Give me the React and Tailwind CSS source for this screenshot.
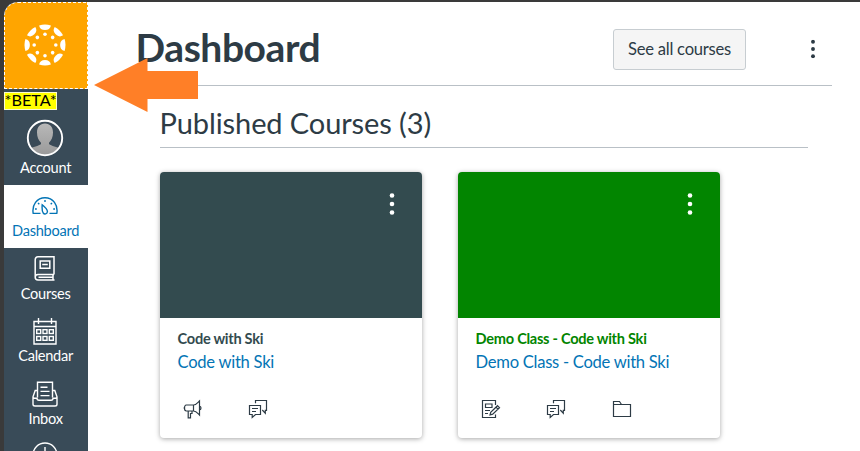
const NAV = [
  { label: 'Account', icon: AvatarIcon },
  { label: 'Dashboard', icon: GaugeIcon, active: true },
  { label: 'Courses', icon: BookIcon },
  { label: 'Calendar', icon: CalendarIcon },
  { label: 'Inbox', icon: InboxIcon },
];

function CanvasLogo() {
  const angles = [0, 45, 90, 135, 180, 225, 270, 315];
  return (
    <svg width="42" height="42" viewBox="-21 -21 42 42" fill="#fff">
      {angles.map((a) => (
        <g key={a} transform={`rotate(${a})`}>
          <path d="M-5.9 -19.6 A20.6 20.6 0 0 1 5.9 -19.6 A6 5.5 0 0 1 -5.9 -19.6Z" />
          <circle cx="0" cy="-10.8" r="1.8" />
        </g>
      ))}
    </svg>
  );
}

function AvatarIcon() {
  return (
    <svg width="38" height="38" viewBox="0 0 38 38">
      <defs>
        <clipPath id="face"><circle cx="19" cy="19" r="16.5" /></clipPath>
        <linearGradient id="person" x1="0" y1="0" x2="0" y2="1">
          <stop offset="0" stopColor="#b8b8b8" />
          <stop offset="1" stopColor="#989898" />
        </linearGradient>
      </defs>
      <circle cx="19" cy="19" r="17.2" fill="#3a4a57" />
      <g clipPath="url(#face)" fill="url(#person)">
        <path d="M19 4.5c5 0 8 3.700 8 9 0 4.500-1.600 8-4 10.200v1.200c2 2.200 8.500 2.600 11.500 5.100V38h-31v-8c3-2.500 9.500-2.900 11.500-5.100v-1.200c-2.400-2.200-4-5.700-4-10.200 0-5.300 3-9 8-9z" />
      </g>
      <circle cx="19" cy="19" r="17.200" fill="none" stroke="#fff" strokeWidth="1.900" />
    </svg>
  );
}

function GaugeIcon() {
  return (
    <svg width="26" height="18" viewBox="0 0 26 18" fill="none" stroke="#0374b5" strokeWidth="1.400">
      <path d="M8.500 16.400H1.200C-.3 8 5 .8 13 .8S26.300 8 24.800 16.400h-7.300" />
      <path d="M10.200 7.800c-.3 3.400 0 6.600 1 8.200 1.200 1.700 4 1 4.200-1.200.2-2.200-2.400-4.700-5.200-7z" />
      <path d="M13 3v2M6 6l1.300 1.300M20 6l-1.300 1.300M3 12h1.800M21.200 12H23" />
    </svg>
  );
}

function BookIcon() {
  return (
    <svg width="22" height="25" viewBox="0 0 22 25" fill="none" stroke="#fff" strokeWidth="1.500">
      <path d="M20 18.500V.8H4C2.300.8 1.200 2 1.200 3.700v17.500c0 1.700 1 2.700 2.800 2.700h16.500M20 18.500H4c-3.700 0-3.700 5.400 0 5.400M19 18.500v5.400M4.500 21.200H19" />
      <path d="M6.200 5h9.600v7.300H6.200zM8.200 8.400h5.600" />
    </svg>
  );
}

function CalendarIcon() {
  const cols = [3.700, 10, 16.300];
  return (
    <svg width="24" height="27" viewBox="0 0 24 27" fill="none" stroke="#fff" strokeWidth="1.400">
      <path d="M1 3.500h22V26H1zM1 8.500h22M5.500 0v6M18.500 0v6" />
      {cols.map((x) => (
        <g key={x}>
          <rect x={x} y="11.700" width="4" height="3.800" />
          <rect x={x} y="18.500" width="4" height="3.800" />
        </g>
      ))}
    </svg>
  );
}

function InboxIcon() {
  return (
    <svg width="26" height="26" viewBox="0 0 26 26" fill="none" stroke="#fff" strokeWidth="1.400">
      <path d="M5.500 16.500V1.200h15v15.300M8.500 6.200h7M8.500 10.400h9M8.500 14.600h9" />
      <path d="M5.500 9.500H3.200L1 15.800v7.400C1 24.400 1.800 25 3 25h20c1.200 0 2-.6 2-1.800v-7.400l-2.200-6.300h-2.300M1 15.800c0 1 .5 1.400 1.500 1.400H5c0 1.500.6 2 2 2h12c1.400 0 2-.5 2-2h2.500c1 0 1.500-.4 1.500-1.400" />
    </svg>
  );
}

function ClockIcon() {
  return (
    <svg width="26" height="26" viewBox="0 0 26 26" fill="none" stroke="#fff" strokeWidth="1.400">
      <circle cx="13" cy="13" r="12" />
      <path d="M13 5v8h6" />
    </svg>
  );
}

function Dots({ className }) {
  return (
    <svg className={className} width="6" height="22" viewBox="0 0 6 22" fill="currentColor">
      <circle cx="3" cy="2.500" r="2.300" />
      <circle cx="3" cy="11" r="2.300" />
      <circle cx="3" cy="19.500" r="2.300" />
    </svg>
  );
}

function Megaphone() {
  return (
    <svg width="20" height="20" viewBox="0 0 20 20" fill="none" stroke="#2d3b45" strokeWidth="1.200">
      <path d="M10.500 6H3.300C.9 6 .9 12 3.300 12h7.200zM10.500 6c2.500 0 4-2 6-4v14c-2-2-3.500-4-6-4M16.500 7c2 .5 2 3.500 0 4M5.200 12v6.800h2.300v-4.300H9V12M2 9H.5" />
    </svg>
  );
}

function Chat() {
  return (
    <svg width="20" height="20" viewBox="0 0 20 20" fill="none" stroke="#2d3b45" strokeWidth="1.200">
      <path d="M1.500 6.500h11v9H7.500l-3.300 3v-3H1.500zM4 9.500h6M4 12.500h4" />
      <path d="M7.500 4.200V1.500h11v9.800h-1.200v2.900l-3-3.200" />
    </svg>
  );
}

function Assignment() {
  return (
    <svg width="20" height="20" viewBox="0 0 20 20" fill="none" stroke="#2d3b45" strokeWidth="1.200">
      <path d="M14.500 6V1.500h-13v17h13v-3M4.500 5H11v3.500H4.500zM4 11.500h5M4 14.500h3" />
      <path d="M16.500 6.700l2 2-6.800 6.500-2.700.7.700-2.700zM15 8.200l2 2" />
    </svg>
  );
}

function Folder() {
  return (
    <svg width="20" height="20" viewBox="0 0 20 20" fill="none" stroke="#2d3b45" strokeWidth="1.200">
      <path d="M1.500 17.500v-15h6l2 3h9v12zM1.500 5.500h8" />
    </svg>
  );
}

function CourseCard({ title, header, text, icons }) {
  return (
    <article className="flex h-[266px] w-[262px] flex-col overflow-hidden rounded bg-white shadow-[0_1px_5px_rgba(0,0,0,0.35)]">
      <div className={`flex h-[146px] justify-end pt-[21px] pr-[27px] ${header}`}>
        <Dots className="text-white" />
      </div>
      <div className="flex flex-col px-[18px] pt-[10px]">
        <h3 className={`text-[14.600px] leading-[22px] font-bold tracking-[-0.280px] whitespace-nowrap ${text}`}>{title}</h3>
        <a className="text-[16.600px] leading-6 tracking-[-0.280px] whitespace-nowrap text-[#0374b5]">{title}</a>
      </div>
      <div className="mt-[25px] flex gap-[45.700px] pl-[23px]">
        {icons.map((Icon, i) => <Icon key={i} />)}
      </div>
    </article>
  );
}

export default function App() {
  return (
    <div className="flex h-[451px] w-[860px] overflow-hidden bg-[#3a3a3a] pt-[2px] pl-[3.600px] font-['Lato',sans-serif] text-[#2d3b45]">
      <div className="flex flex-1 overflow-hidden rounded-tl-[14px] bg-white">
        <nav className="flex w-[84px] shrink-0 flex-col bg-[#394b58] text-white">
          <div className="flex h-[87px] shrink-0 items-center justify-center rounded-tl-[14px] border border-dashed border-white bg-[#ffa500] pr-[1px] pb-[1px]">
            <CanvasLogo />
          </div>
          <div className="mt-[3px] h-[18px] w-[53px] shrink-0 border border-[#fafad0] bg-[#ffff00] text-center text-[16.200px] leading-[14px] whitespace-nowrap text-black">*BETA*</div>
          {NAV.map(({ label, icon: Icon, active }) => (
            <a
              key={label}
              className={`flex shrink-0 flex-col items-center justify-end pb-[7px] text-[14.600px] leading-[20px] tracking-[-0.280px] ${label === 'Account' ? 'h-[75.400px]' : 'h-[62.600px]'} ${active ? 'bg-white text-[#0374b5]' : ''}`}
            >
              <div className={`mb-[1px] flex items-center justify-center pr-[1px] ${label === 'Account' ? 'h-[38px]' : 'h-[28px]'}`}>
                <Icon />
              </div>
              {label}
            </a>
          ))}
          <div className="flex shrink-0 justify-center pt-[6px] pr-[1px]"><ClockIcon /></div>
        </nav>
        <main className="flex-1 pr-7 pl-12">
          <header className="flex h-[84px] items-center border-b border-[#b9c0c6] pb-[1px]">
            <h1 className="flex-1 pt-[7px] text-[39px] leading-[46px] font-bold tracking-[-0.450px]">Dashboard</h1>
            <button className="mt-[13px] h-[41px] w-[133px] rounded-[3px] border border-[#c7cdd1] bg-[#f5f5f5] pb-[1px] text-[16.600px] tracking-[-0.240px]">See all courses</button>
            <Dots className="mt-[12px] mr-4 ml-16 scale-[0.850]" />
          </header>
          <section className="px-6">
            <h2 className="h-[62px] border-b border-[#b9c0c6] pt-[17px] text-[29px] leading-[40px] tracking-[-0.100px]">Published Courses (3)</h2>
            <div className="mt-6 flex gap-9">
              <CourseCard title="Code with Ski" header="bg-[#334b4f]" text="text-[#334b4f]" icons={[Megaphone, Chat]} />
              <CourseCard title="Demo Class - Code with Ski" header="bg-[#028500]" text="text-[#028500]" icons={[Assignment, Chat, Folder]} />
            </div>
          </section>
        </main>
      </div>
      <svg className="absolute top-[58px] left-[94px]" width="104" height="54" viewBox="0 0 104 54">
        <path d="M0 27 53.500 0v13H104v28H53.500v13z" fill="#ff7f27" />
      </svg>
    </div>
  );
}
